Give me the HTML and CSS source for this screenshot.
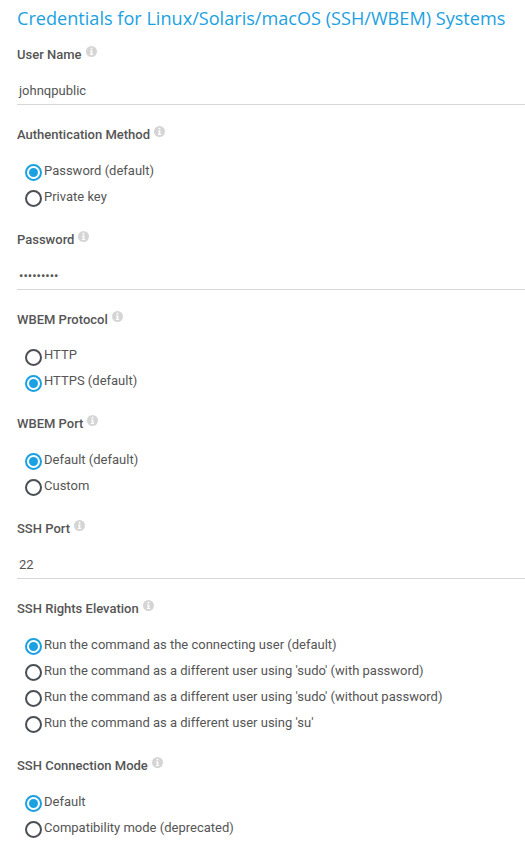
FILE: index.html
```html
<!DOCTYPE html>
<html lang="en">
<head>
  <meta charset="UTF-8">
  <title>Credentials</title>
  <link rel="stylesheet" href="styles.css">
</head>
<body>
  <svg class="defs" width="0" height="0">
    <symbol id="info" viewBox="0 0 10 10">
      <circle cx="5" cy="5" r="5" fill="#d5d5d5"/>
      <rect x="4.2" y="1.6" width="1.6" height="1.5" fill="#fff"/>
      <path d="M3.6 4h2.2v3.3h.7v.9H3.5v-.9h.8V4.9h-.7z" fill="#fff"/>
    </symbol>
  </svg>
  <h1>Credentials for Linux/Solaris/macOS (SSH/WBEM) Systems</h1>

  <div class="field">
    <div class="label">User Name <svg class="info"><use href="#info"/></svg></div>
    <div class="input">johnqpublic</div>
  </div>

  <div class="field">
    <div class="label">Authentication Method <svg class="info"><use href="#info"/></svg></div>
    <div class="radios">
      <div class="radio on">Password (default)</div>
      <div class="radio">Private key</div>
    </div>
  </div>

  <div class="field">
    <div class="label">Password <svg class="info"><use href="#info"/></svg></div>
    <div class="input">•••••••••</div>
  </div>

  <div class="field">
    <div class="label">WBEM Protocol <svg class="info"><use href="#info"/></svg></div>
    <div class="radios">
      <div class="radio">HTTP</div>
      <div class="radio on">HTTPS (default)</div>
    </div>
  </div>

  <div class="field">
    <div class="label">WBEM Port <svg class="info"><use href="#info"/></svg></div>
    <div class="radios">
      <div class="radio on">Default (default)</div>
      <div class="radio">Custom</div>
    </div>
  </div>

  <div class="field">
    <div class="label">SSH Port <svg class="info"><use href="#info"/></svg></div>
    <div class="input">22</div>
  </div>

  <div class="field">
    <div class="label">SSH Rights Elevation <svg class="info"><use href="#info"/></svg></div>
    <div class="radios">
      <div class="radio on">Run the command as the connecting user (default)</div>
      <div class="radio">Run the command as a different user using 'sudo' (with password)</div>
      <div class="radio">Run the command as a different user using 'sudo' (without password)</div>
      <div class="radio">Run the command as a different user using 'su'</div>
    </div>
  </div>

  <div class="field">
    <div class="label">SSH Connection Mode <svg class="info"><use href="#info"/></svg></div>
    <div class="radios">
      <div class="radio on">Default</div>
      <div class="radio">Compatibility mode (deprecated)</div>
    </div>
  </div>
</body>
</html>
```

FILE: styles.css
```css
body {
  margin: 0;
  padding: 0 0 0 17px;
  overflow: hidden;
  font-family: Roboto, Arial, sans-serif;
  font-size: 13px;
  color: #555;
  background-color: #fff;
}
.defs {
  position: absolute;
}
h1 {
  margin: 0;
  padding-top: 5px;
  height: 42px;
  font-family: "Open Sans", Arial, sans-serif;
  font-size: 18.13px;
  font-weight: 400;
  line-height: 26px;
  color: #1ba1e2;
  white-space: nowrap;
}
.field {
  margin-bottom: 22px;
}
.label {
  display: flex;
  align-items: flex-start;
  gap: 4px;
  height: 16px;
  line-height: 16px;
  font-weight: 500;
  color: #555;
}
.info {
  width: 11px;
  height: 11px;
  margin-top: -1px;
}
.input {
  margin-top: 12px;
  padding: 0 2px;
  height: 29px;
  line-height: 32px;
  border-bottom: 1px solid #d8d8d8;
}
.radios {
  margin-top: 19.6px;
  padding-left: 8px;
}
.radio {
  display: flex;
  height: 26px;
  line-height: 16px;
  padding-left: 19px;
  position: relative;
}
.radio:last-child {
  height: 21.15px;
}
.radio::before {
  content: "";
  position: absolute;
  left: 0;
  top: 1.4px;
  width: 13px;
  height: 13px;
  border: 2px solid #4a4f55;
  border-radius: 50%;
}
.radio.on::before {
  border-color: #1ba1e2;
}
.radio.on::after {
  content: "";
  position: absolute;
  left: 4px;
  top: 5.4px;
  width: 9px;
  height: 9px;
  border-radius: 50%;
  background-color: #1ba1e2;
}
```
